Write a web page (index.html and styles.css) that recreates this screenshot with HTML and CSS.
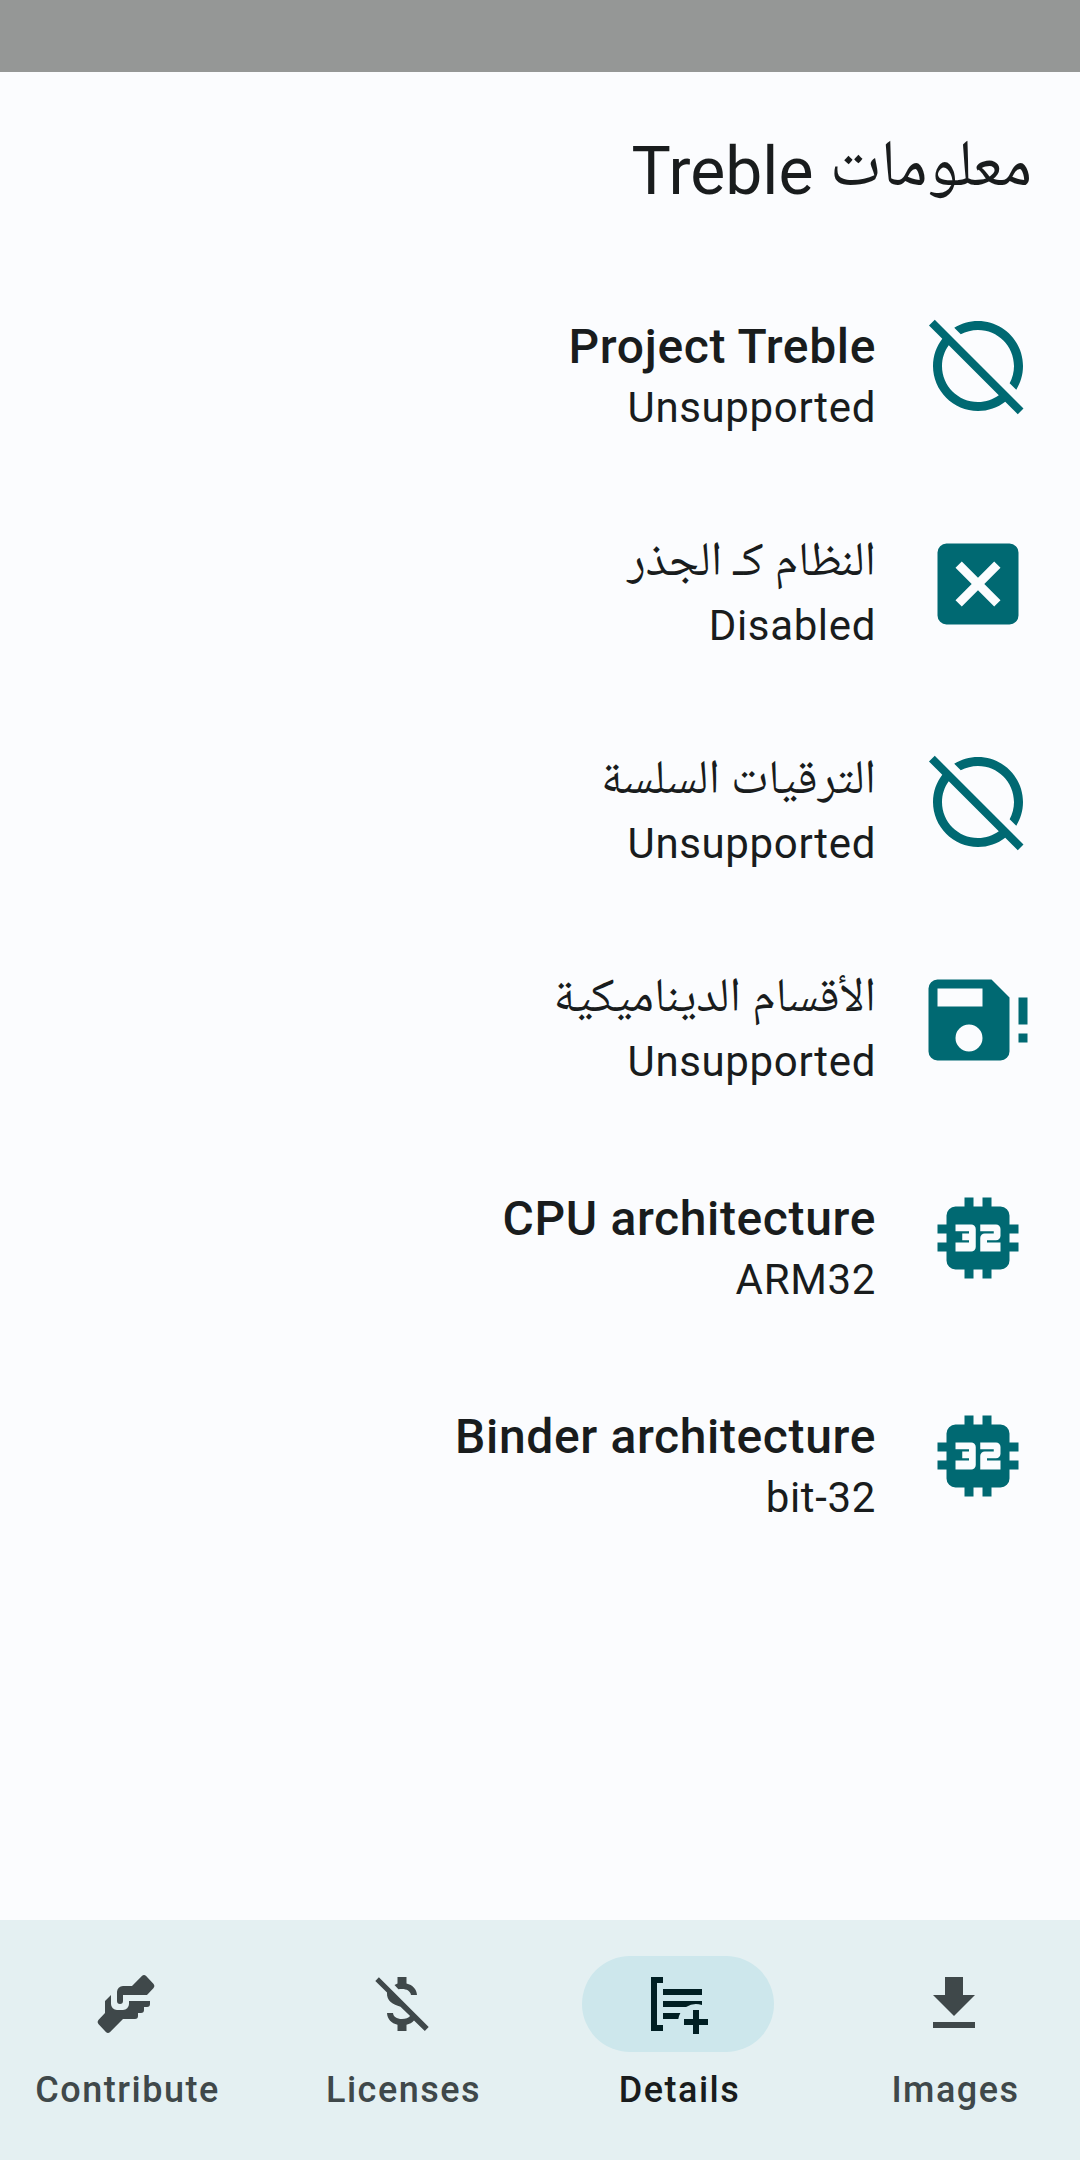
FILE: index.html
```html
<!DOCTYPE html>
<html lang="ar" dir="rtl">
<head>
<meta charset="utf-8">
<title>معلومات Treble</title>
<link rel="stylesheet" href="styles.css">
</head>
<body>
<svg class="defs" aria-hidden="true">
  <symbol id="off" viewBox="0 0 24 24"><path d="M22.11 21.46L2.39 1.73L1.11 3L4.06 5.95C2.78 7.63 2 9.72 2 12C2 17.5 6.5 22 12 22C14.28 22 16.37 21.23 18.05 19.94L20.84 22.73L22.11 21.46M12 20C7.58 20 4 16.42 4 12C4 10.27 4.56 8.68 5.5 7.38L16.62 18.5C15.32 19.45 13.73 20 12 20M8.17 4.97L6.72 3.5C8.25 2.56 10.06 2 12 2C17.5 2 22 6.5 22 12C22 13.94 21.44 15.75 20.5 17.28L19.03 15.83C19.65 14.69 20 13.39 20 12C20 7.58 16.42 4 12 4C10.61 4 9.31 4.35 8.17 4.97Z"/></symbol>
  <symbol id="box" viewBox="0 0 24 24"><path d="M19 3H5A2 2 0 0 0 3 5V19A2 2 0 0 0 5 21H19A2 2 0 0 0 21 19V5A2 2 0 0 0 19 3M15.6 17L12 13.4L8.4 17L7 15.6L10.6 12L7 8.4L8.4 7L12 10.6L15.6 7L17 8.4L13.4 12L17 15.6Z"/></symbol>
  <symbol id="save" viewBox="0 0 24 24"><path fill-rule="evenodd" d="M15 3H3A2 2 0 0 0 1 5V19A2 2 0 0 0 3 21H17A2 2 0 0 0 19 19V7ZM3 5H13V9H3ZM10 13a3 3 0 1 1 0 6a3 3 0 0 1 0-6ZM21 7h2v6h-2ZM21 15h2v2h-2Z"/></symbol>
  <symbol id="chip" viewBox="0 0 24 24"><path fill-rule="evenodd" d="M9 3V5H7A2 2 0 0 0 5 7V9H3V11H5V13H3V15H5V17A2 2 0 0 0 7 19H9V21H11V19H13V21H15V19H17A2 2 0 0 0 19 17V15H21V13H19V11H21V9H19V7A2 2 0 0 0 17 5H15V3H13V5H11V3ZM7 9H10.5A1 1 0 0 1 11.5 10V14A1 1 0 0 1 10.5 15H7V13H10V12.5H8.5V11H10V10.5H7ZM12.5 9H16A1 1 0 0 1 17 10V11.5A1 1 0 0 1 16 12.5H14V13H17V15H12.5V12A1 1 0 0 1 13.5 11H15.5V10.5H12.5Z"/></symbol>
</svg>
<div class="status"></div>
<h1 class="title"><span class="naskh">معلومات</span> Treble</h1>
<main class="list">
  <div class="row"><svg class="icon"><use href="#off"/></svg><div class="text"><div class="name">Project Treble</div><div class="value">Unsupported</div></div></div>
  <div class="row"><svg class="icon"><use href="#box"/></svg><div class="text"><div class="name arabic">النظام كـ الجذر</div><div class="value">Disabled</div></div></div>
  <div class="row"><svg class="icon"><use href="#off"/></svg><div class="text"><div class="name arabic">الترقيات السلسة</div><div class="value">Unsupported</div></div></div>
  <div class="row"><svg class="icon"><use href="#save"/></svg><div class="text"><div class="name arabic">الأقسام الديناميكية</div><div class="value">Unsupported</div></div></div>
  <div class="row"><svg class="icon"><use href="#chip"/></svg><div class="text"><div class="name">CPU architecture</div><div class="value">ARM32</div></div></div>
  <div class="row"><svg class="icon"><use href="#chip"/></svg><div class="text"><div class="name">Binder architecture</div><div class="value">bit-32</div></div></div>
</main>
<nav class="nav">
  <div class="item"><span class="pill"><svg viewBox="0 0 24 24"><path d="M19 9h-4V3H9v6H5l7 7zM5 18v2h14v-2z"/></svg></span><span class="label">Images</span></div>
  <div class="item active"><span class="pill"><svg viewBox="0 0 24 24"><path d="M3 3H7V5H5V19H7V21H3ZM7 7H20V9H7ZM7 11H20V12.34A6 6 0 0 0 14.7 13H7ZM7 15H12.8A6 6 0 0 0 12.1 17H7ZM17 14H19V17H22V19H19V22H17V19H14V17H17Z"/></svg></span><span class="label">Details</span></div>
  <div class="item"><span class="pill"><svg viewBox="0 0 24 24"><path d="M9.5 5.7L10.5 5.2V3H13.5V5.15C15.6 5.6 16.9 7.1 17 9H15C14.8 7.7 13.6 7 12 7C11.6 7 11.2 7 10.8 7.1ZM4.3 3.1L3.1 4.3L7 8.2C6.8 11 9 12.3 11.5 12.9L14.7 16C14.2 16.7 13.2 17 12 17C10.2 17 9.1 16.2 9 15H7C7.1 17 8.5 18.5 10.5 18.9V21H13.5V18.9C14.5 18.7 15.4 18.2 16 17.5L19.6 21L20.9 19.7Z"/></svg></span><span class="label">Licenses</span></div>
  <div class="item"><span class="pill"><svg viewBox="0 0 24 24"><path d="M14 6L17.3 2.7Q18 2 18.7 2.7L21.2 5.3Q21.8 6 21.2 6.7L19 9H11V11A1 1 0 0 1 9 11V8A2 2 0 0 1 11 6ZM7 9V12A2 2 0 0 0 9 14H11A2 2 0 0 0 13 12V11H20V12A1 1 0 0 1 19 13H18V14A1 1 0 0 1 17 15H16V16A1 1 0 0 1 15 17H11L6.7 21.3Q6 22 5.3 21.3L2.8 18.7Q2.2 18 2.8 17.3L5 15V11Z"/></svg></span><span class="label">Contribute</span></div>
</nav>
</body>
</html>
```
FILE: styles.css
```css
* { box-sizing: border-box; }
body {
  margin: 0;
  height: 2160px;
  display: flex;
  flex-direction: column;
  background: #fbfcfe;
  color: #191c1d;
  font-family: Roboto, "Noto Naskh Arabic UI", "Noto Naskh Arabic", sans-serif;
}
.defs { display: none; }
.status { height: 72px; background: #959796; }
.title {
  margin: 0;
  height: 192px;
  padding-inline-start: 48px;
  font-size: 66px;
  line-height: 192px;
  font-weight: 400;
  white-space: nowrap;
}
.naskh { font-family: "Noto Naskh Arabic UI", "Noto Naskh Arabic", "Liberation Serif", serif; }
.list { flex: 1; padding-top: 10px; }
.row {
  height: 218px;
  display: flex;
  padding: 38px 48px 0;
  gap: 48px;
}
.icon { width: 108px; height: 108px; fill: #006972; }
.name {
  height: 66px;
  padding-top: 2px;
  font-size: 48px;
  line-height: 66px;
  font-weight: 500;
  letter-spacing: 0.63px;
  white-space: nowrap;
}
.arabic {
  padding-top: 0;
  font-family: "Noto Naskh Arabic UI", "Noto Naskh Arabic", "DejaVu Sans", sans-serif;
  font-weight: 400;
  line-height: 65px;
  letter-spacing: 0;
  word-spacing: 0.6px;
}
.value {
  font-size: 42px;
  line-height: 60px;
  letter-spacing: 0.65px;
}
.nav {
  height: 240px;
  padding-top: 36px;
  display: flex;
  gap: 24px;
  background: #e4f0f2;
  color: #3f484a;
  fill: #3f484a;
}
.item {
  flex: 1;
  display: flex;
  flex-direction: column;
  align-items: center;
  gap: 14px;
  font-size: 36px;
  line-height: 48px;
  font-weight: 500;
  letter-spacing: 1.5px;
}
.label { padding-left: 3px; direction: ltr; }
.pill {
  width: 192px;
  height: 96px;
  padding: 12px 60px;
  border-radius: 48px;
}
.pill svg { display: block; width: 72px; height: 72px; }
.active { color: #191c1d; fill: #001f23; }
.active .pill { background: #cde7ec; }
```
